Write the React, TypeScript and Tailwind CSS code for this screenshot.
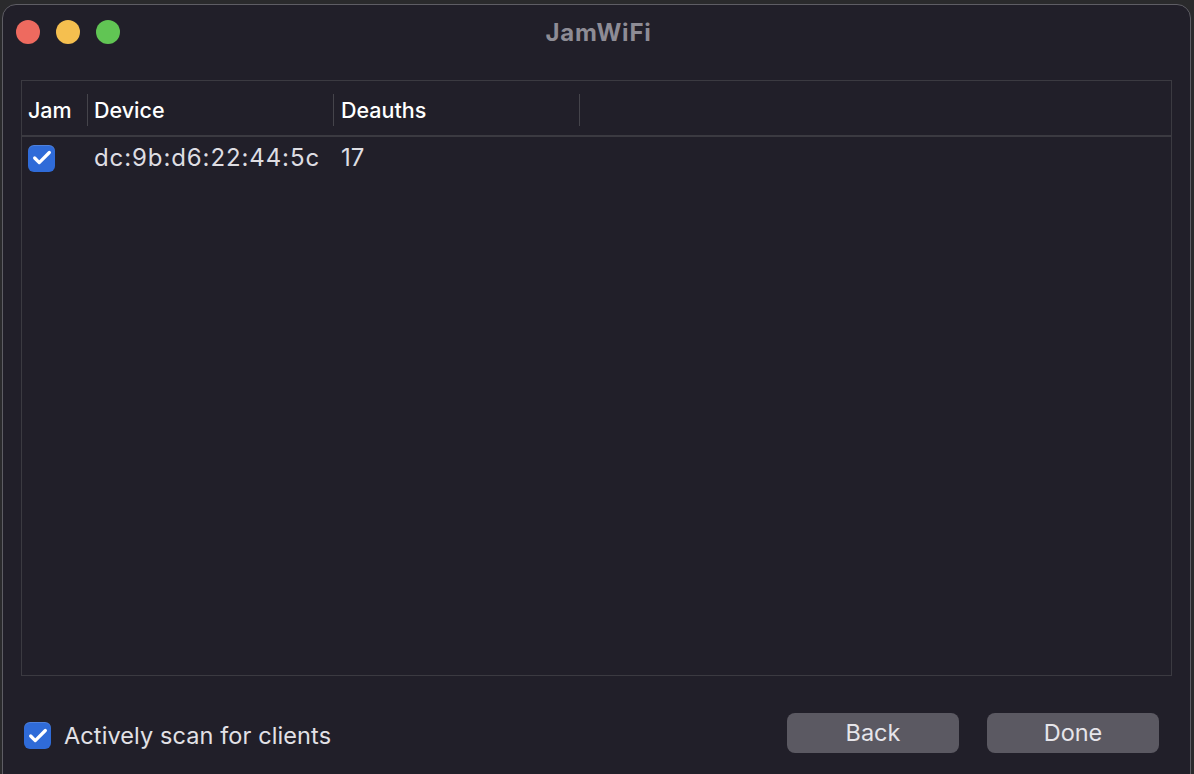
import { Check } from "lucide-react";

const font = { fontFamily: "Inter, 'Noto Sans', sans-serif" };

function Checkbox() {
  return (
    <div className="flex h-[27px] w-[27px] items-center justify-center rounded-[6px] bg-[#2f6bd8] shadow-[inset_0_1px_0_rgba(255,255,255,0.15)]">
      <Check className="h-[22px] w-[22px] text-white" strokeWidth={3.5} />
    </div>
  );
}

function Light({ color }: { color: string }) {
  return <div className={`h-[24px] w-[24px] rounded-full ${color}`} />;
}

export default function App() {
  return (
    <div className="h-[774px] w-[1194px] overflow-hidden bg-[#2a2a2c] pl-[2px] pt-[4px]" style={font}>
      <div className="flex h-[790px] w-[1189px] flex-col rounded-[14px] border border-[#5e5d64] bg-[#211f29]">
        {/* title bar */}
        <div className="flex h-[75px] shrink-0 items-start">
          <div className="flex w-[200px] gap-[16px] pl-[13px] pt-[15px]">
            <Light color="bg-[#ee6a5f]" />
            <Light color="bg-[#f5bf4f]" />
            <Light color="bg-[#61c554]" />
          </div>
          <div className="flex-1 pl-[4px] pt-[10px] text-center text-[24px] font-bold tracking-[0.8px] text-[#8e8c95]">JamWiFi</div>
          <div className="w-[200px]" />
        </div>

        {/* table */}
        <div className="mx-[18px] flex h-[596px] shrink-0 flex-col border border-[#3b3a41]">
          <div className="flex h-[56px] shrink-0 items-center border-b-2 border-[#3b3a41] pt-[4px] text-[21.5px] font-medium text-white">
            <div className="w-[65px] pl-[6px]">Jam</div>
            <div className="h-[32px] w-px bg-[#45444b]" />
            <div className="w-[245px] pl-[6px]">Device</div>
            <div className="h-[32px] w-px bg-[#45444b]" />
            <div className="w-[245px] pl-[7px]">Deauths</div>
            <div className="h-[32px] w-px bg-[#45444b]" />
          </div>
          <div className="flex h-[42px] items-center text-[24px] text-[#dedde2]">
            <div className="w-[66px] pl-[6px]">
              <Checkbox />
            </div>
            <div className="w-[246px] pl-[6px] tracking-[0.9px]">dc:9b:d6:22:44:5c</div>
            <div className="pl-[7px]">17</div>
          </div>
        </div>

        {/* footer */}
        <div className="flex items-center pl-[21px] pr-[31px] pt-[37px]">
          <div className="mt-[5px] flex items-center gap-[13px]">
            <Checkbox />
            <span className="text-[23.5px] tracking-[0.1px] text-[#e2e1e6]">Actively scan for clients</span>
          </div>
          <div className="flex-1" />
          <div className="flex gap-[28px]">
            <button className="h-[40px] w-[172px] rounded-[8px] bg-[#5b5962] pb-[2px] text-[23.5px] text-[#e6e5ea]">Back</button>
            <button className="h-[40px] w-[172px] rounded-[8px] bg-[#5b5962] pb-[2px] text-[23.5px] text-[#e6e5ea]">Done</button>
          </div>
        </div>
      </div>
    </div>
  );
}
